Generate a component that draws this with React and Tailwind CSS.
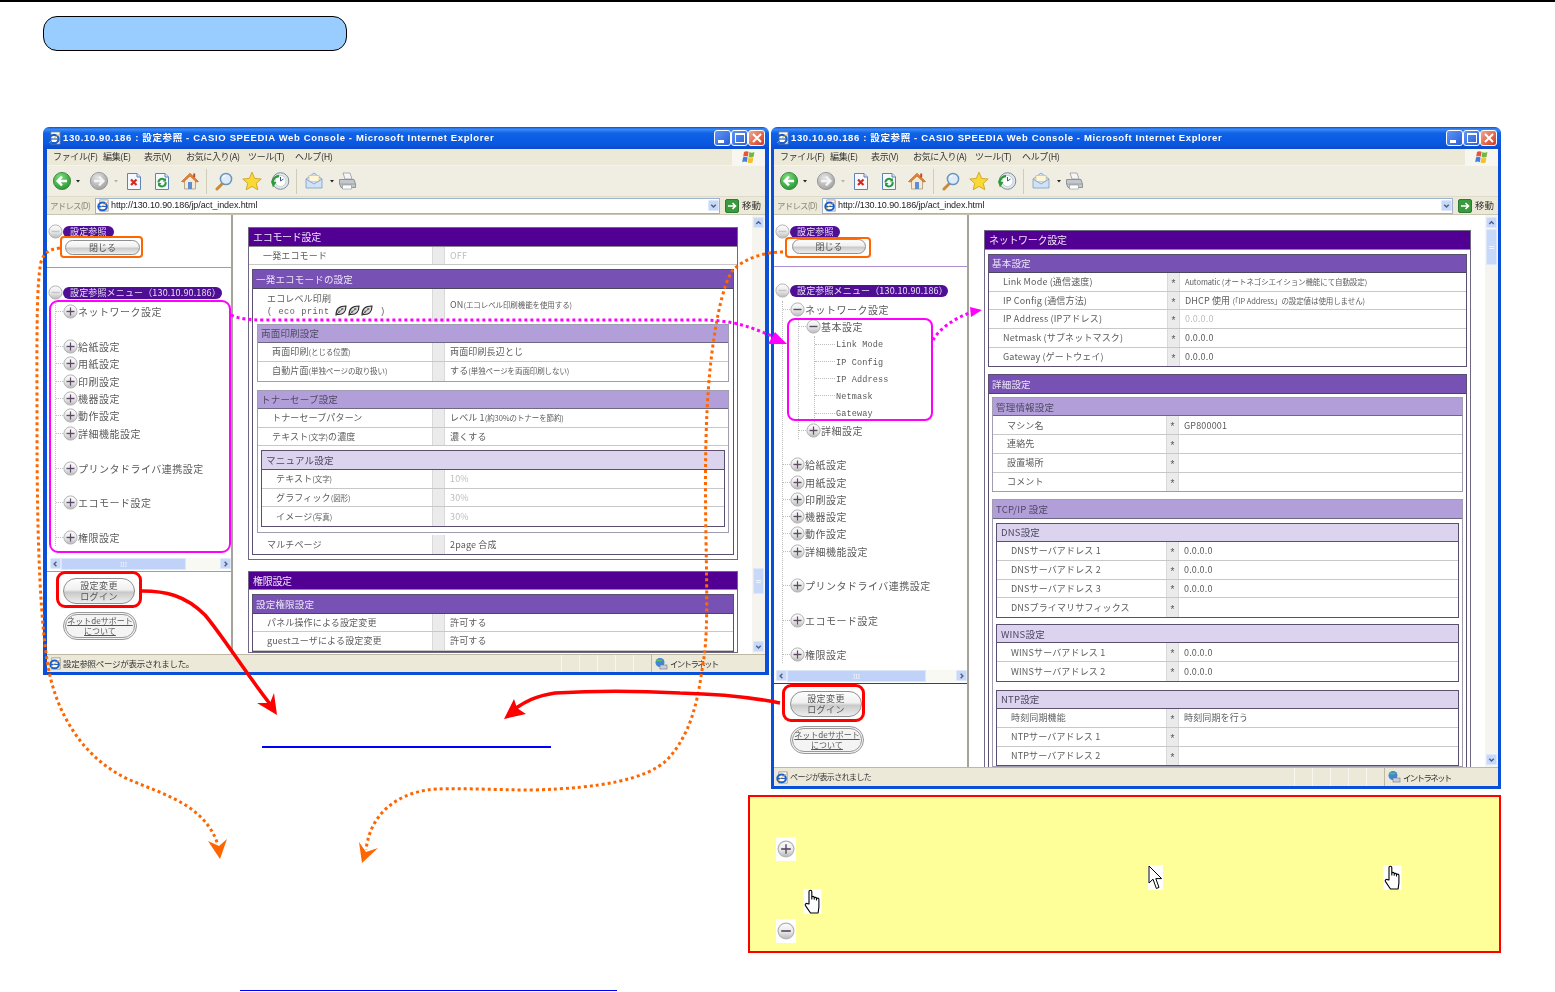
import React from "react";

const JP = "font-['Noto_Sans_CJK_JP','Liberation_Sans',sans-serif]";

function Defs() {
  return (
    <svg className="absolute w-0 h-0" aria-hidden="true">
      <defs>
        <linearGradient id="gb" x1="0" y1="0" x2="0" y2="1">
          <stop offset="0" stopColor="#fdfdfd" />
          <stop offset="0.55" stopColor="#e8e8e8" />
          <stop offset="1" stopColor="#b8b8b8" />
        </linearGradient>
        <radialGradient id="grn" cx="0.4" cy="0.3" r="0.8">
          <stop offset="0" stopColor="#7fe07a" />
          <stop offset="1" stopColor="#1d8f2c" />
        </radialGradient>
        <radialGradient id="gry" cx="0.4" cy="0.3" r="0.8">
          <stop offset="0" stopColor="#e4e4e4" />
          <stop offset="1" stopColor="#9a9a9a" />
        </radialGradient>
      </defs>
    </svg>
  );
}

function Circ({ kind = "plus", size = 15 }) {
  const c = kind === "blank" ? "#c4c4ca" : "#5c4a68";
  return (
    <svg width={size} height={size} viewBox="0 0 15 15" className="shrink-0">
      <circle cx="7.5" cy="7.5" r="6.6" fill="url(#gb)" stroke="#b4b4b4" />
      <path d="M3.5 7.5H11.5" stroke={c} strokeWidth="1.4" />
      {kind === "plus" && <path d="M7.5 3.5V11.5" stroke={c} strokeWidth="1.2" />}
    </svg>
  );
}

function IE({ size = 13 }) {
  return (
    <svg width={size} height={size} viewBox="0 0 14 14" className="shrink-0">
      <rect x="3" y="1" width="9" height="12" fill="#fff" stroke="#8a8a8a" strokeWidth="0.8" />
      <ellipse cx="6" cy="8" rx="4.6" ry="4.2" fill="none" stroke="#1c5fc8" strokeWidth="2.2" />
      <path d="M2 8H10" stroke="#1c5fc8" strokeWidth="1.2" />
      <path d="M1 12C3 10 8 5 12 3" stroke="#e0a030" strokeWidth="0.9" fill="none" />
    </svg>
  );
}

function Flag() {
  return (
    <svg width="16" height="16" viewBox="0 0 16 16">
      <path d="M3 3C4.5 2 6 2 7.6 2.8L6.8 7.6C5.2 6.8 3.6 6.8 2.2 7.6Z" fill="#e8553a" />
      <path d="M8.4 3.1C10 3.9 11.6 3.9 13.4 3L12.6 7.8C11 8.7 9.2 8.6 7.6 7.9Z" fill="#70b83e" />
      <path d="M2 8.4C3.5 7.6 5 7.6 6.6 8.4L5.8 13.2C4.3 12.4 2.7 12.4 1.2 13.2Z" fill="#3f7fe0" />
      <path d="M7.4 8.7C9 9.5 10.8 9.5 12.4 8.6L11.6 13.4C10 14.3 8.2 14.2 6.6 13.5Z" fill="#f4c030" />
    </svg>
  );
}

const Back = () => (
  <svg width="20" height="20" viewBox="0 0 20 20">
    <circle cx="10" cy="10" r="8.6" fill="url(#grn)" stroke="#2c7a34" strokeWidth="0.8" />
    <path d="M15 10H6.5M10 5.6 5.6 10 10 14.4" fill="none" stroke="#fff" strokeWidth="2.4" />
  </svg>
);
const Forward = () => (
  <svg width="20" height="20" viewBox="0 0 20 20">
    <circle cx="10" cy="10" r="8.6" fill="url(#gry)" stroke="#8b8b8b" strokeWidth="0.8" />
    <path d="M5 10H13.5M10 5.6 14.4 10 10 14.4" fill="none" stroke="#f4f4f4" strokeWidth="2.4" />
  </svg>
);
const Page = ({ children }) => (
  <svg width="18" height="19" viewBox="0 0 18 19">
    <path d="M2.5 1.5H12L15.5 5V17.5H2.5Z" fill="#f5f8ff" stroke="#5f82b8" />
    <path d="M12 1.5V5H15.5" fill="#dce6f5" stroke="#5f82b8" />
    {children}
  </svg>
);
const Stop = () => (
  <Page>
    <path d="M6 7.5 11.5 13M11.5 7.5 6 13" stroke="#d52a1c" strokeWidth="2.2" />
  </Page>
);
const Refresh = () => (
  <Page>
    <path d="M5.5 10.5A3.5 3.5 0 0 1 12 8.5" fill="none" stroke="#2d9a3a" strokeWidth="2" />
    <path d="M12.5 10A3.5 3.5 0 0 1 6 12.5" fill="none" stroke="#2d9a3a" strokeWidth="2" />
    <path d="M13 6V9.6H9.6ZM5 14.5V11H8.5Z" fill="#2d9a3a" />
  </Page>
);
const Home = () => (
  <svg width="20" height="20" viewBox="0 0 20 20">
    <path d="M4.5 9V18H15.5V9L10 4Z" fill="#f2e9d8" stroke="#a58a66" strokeWidth="0.7" />
    <path d="M1.5 10.5 10 2.2 18.5 10.5 16.5 11 10 5 3.5 11Z" fill="#e8842e" stroke="#b75a1a" strokeWidth="0.6" />
    <rect x="13.2" y="2.5" width="2" height="3.8" fill="#c24a2a" />
    <rect x="8" y="11" width="4" height="7" fill="#5f8ecb" />
  </svg>
);
const Search = () => (
  <svg width="20" height="20" viewBox="0 0 20 20">
    <path d="M9 12 3 18" stroke="#c98c3a" strokeWidth="3" strokeLinecap="round" />
    <circle cx="12" cy="8" r="5.6" fill="#dcecfb" stroke="#6d93b8" strokeWidth="1.5" />
    <path d="M9 6.5A3.5 3.5 0 0 1 12 4.5" stroke="#fff" strokeWidth="1.2" fill="none" />
  </svg>
);
const Star = () => (
  <svg width="20" height="20" viewBox="0 0 20 20">
    <path d="M10 1.2 12.7 7.4 19.2 8 14.3 12.3 15.8 18.8 10 15.4 4.2 18.8 5.7 12.3 .8 8 7.3 7.4Z" fill="#fbd934" stroke="#c89a18" strokeWidth="0.8" />
  </svg>
);
const History = () => (
  <svg width="20" height="20" viewBox="0 0 20 20">
    <circle cx="10.5" cy="10" r="8.3" fill="#dfe8ee" stroke="#7f8c95" strokeWidth="1" />
    <circle cx="10.5" cy="10" r="5.5" fill="#fff" stroke="#a9b6bf" strokeWidth="0.6" />
    <path d="M10.5 6V10L13.5 8" stroke="#3b5f80" strokeWidth="1" fill="none" />
    <path d="M2.5 11.5A7 7 0 0 1 9 5" stroke="#2d9a3a" strokeWidth="2.4" fill="none" />
    <path d="M3 16.5 1 10.5 6.5 11Z" fill="#2d9a3a" />
  </svg>
);
const Mail = () => (
  <svg width="20" height="20" viewBox="0 0 20 20">
    <path d="M2 8 10 2 18 8V17H2Z" fill="#cfe2f7" stroke="#7f9cc0" strokeWidth="0.8" />
    <rect x="5" y="4.5" width="10" height="6" fill="#fff6d8" stroke="#d9b25e" strokeWidth="0.5" />
    <path d="M2 8 10 13 18 8" fill="none" stroke="#7f9cc0" strokeWidth="0.8" />
  </svg>
);
const Print = () => (
  <svg width="20" height="20" viewBox="0 0 20 20">
    <path d="M6 2H13L15 8H8Z" fill="#f6f6f6" stroke="#8a8f94" strokeWidth="0.7" />
    <path d="M2.5 8.5H17L18.5 13V16.5H4L2.5 13Z" fill="#c4c8cc" stroke="#7c8186" strokeWidth="0.8" />
    <path d="M3 13H18.5" stroke="#8a8f94" strokeWidth="0.6" />
    <rect x="5.5" y="14" width="9" height="4" fill="#fff" stroke="#8a8f94" strokeWidth="0.6" />
  </svg>
);
const Caret = ({ muted }) => (
  <svg width="8" height="8" viewBox="0 0 8 8" className="shrink-0">
    <path d="M2 3H6L4 5.5Z" fill={muted ? "#b5b3a5" : "#222"} />
  </svg>
);
const Chev = ({ dir = "down" }) => {
  const d = {
    down: "M2.5 3.5 5 6 7.5 3.5",
    up: "M2.5 6 5 3.5 7.5 6",
    left: "M6 2.5 3.5 5 6 7.5",
    right: "M4 2.5 6.5 5 4 7.5",
  }[dir];
  return (
    <svg width="10" height="10" viewBox="0 0 10 10">
      <path d={d} fill="none" stroke="#4d6185" strokeWidth="1.6" />
    </svg>
  );
};
const ScrollBtn = ({ dir }) => (
  <div className="w-[11px] h-[11px] flex items-center justify-center shrink-0 bg-[#c8d8f8] border border-[#dfe8fb] rounded-[1px]">
    <Chev dir={dir} />
  </div>
);

const Leaf = () => (
  <svg width="12" height="11" viewBox="0 0 12 11" className="inline-block mr-[1px] align-[-2px]">
    <path d="M1 10C1 4 4 1 11 1 11 7 8 10 2.5 9.5Z" fill="#dcdcdc" stroke="#2b2b2b" strokeWidth="1.1" />
    <path d="M2 9 8 3.5M4 5.5V8M6 4H8.5" stroke="#2b2b2b" strokeWidth="0.7" />
  </svg>
);

function Hand() {
  return (
    <svg width="19" height="25" viewBox="0 0 18 25">
      <rect width="18" height="25" fill="#fff" />
      <path d="M5.5 15V2.6a1.4 1.4 0 0 1 2.8 0V10V8.6a1.2 1.2 0 0 1 2.4 0V10.2V9.2a1.2 1.2 0 0 1 2.3 0V11V10.3a1.2 1.2 0 0 1 2.4 0V18L14.6 24H7L2 16.6C1 15 3 13.7 4.2 14.8Z" fill="#fff" stroke="#000" strokeWidth="1.1" strokeLinejoin="round" />
    </svg>
  );
}

function Cursor() {
  return (
    <svg width="15" height="25" viewBox="0 0 15 25">
      <rect width="15" height="25" fill="#fff" />
      <path d="M1 1V18L5 14.2 8.4 23.5 11 22.4 7.8 13.6H13.6Z" fill="#fff" stroke="#000" strokeWidth="1" strokeLinejoin="round" />
    </svg>
  );
}

/* ---------- browser chrome ---------- */

function TitleBar() {
  return (
    <div className="h-[22px] shrink-0 rounded-t-[6px] flex items-center pl-[5px] pr-[4px] bg-[linear-gradient(180deg,#0a4fd6_0%,#3c8cf6_10%,#0f62e6_28%,#0a58e2_75%,#0a4ccc_100%)]">
      <IE size={14} />
      <div className="ml-[1px] flex-1 text-white font-bold text-[9.5px] tracking-[0.63px] whitespace-nowrap font-['Liberation_Sans','Noto_Sans_CJK_JP',sans-serif]">
        130.10.90.186 : 設定参照 - CASIO SPEEDIA Web Console - Microsoft Internet Explorer
      </div>
      <div className="flex">
        <div className="w-[17px] h-[16px] rounded-[3px] border border-white bg-[linear-gradient(135deg,#5f95f5,#2a5fd8)] flex items-end pl-[3px] pb-[2px]">
          <div className="w-[6px] h-[3px] bg-white" />
        </div>
        <div className="w-[17px] h-[16px] rounded-[3px] border border-white bg-[linear-gradient(135deg,#5f95f5,#2a5fd8)] flex items-center justify-center">
          <div className="w-[10px] h-[10px] border border-white border-t-2" />
        </div>
        <div className="w-[17px] h-[16px] rounded-[3px] border border-white bg-[linear-gradient(135deg,#f3a78f,#cf3a1d)] flex items-center justify-center">
          <svg width="10" height="10" viewBox="0 0 10 10"><path d="M1 1 9 9M9 1 1 9" stroke="#fff" strokeWidth="2" /></svg>
        </div>
      </div>
    </div>
  );
}

function MenuBar() {
  const items = [
    ["ファイル(F)", "w-[50px]"],
    ["編集(E)", "w-[41px]"],
    ["表示(V)", "w-[42px]"],
    ["お気に入り(A)", "w-[62px]"],
    ["ツール(T)", "w-[47px]"],
    ["ヘルプ(H)", "w-[40px]"],
  ];
  return (
    <div className={`h-[17px] shrink-0 flex items-center pl-[6px] bg-[#ece9d8] border-b border-[#f6f4ea] text-[9px] text-[#333] ${JP}`}>
      {items.map(([t, w]) => (
        <span key={t} className={`${w} whitespace-nowrap tracking-[-0.35px]`}>{t}</span>
      ))}
      <div className="ml-auto w-[33px] h-[17px] bg-[#f7f6f0] flex items-center justify-center">
        <Flag />
      </div>
    </div>
  );
}

function ToolSlot({ w, children }) {
  return <div className={`${w} flex items-center justify-center shrink-0`}>{children}</div>;
}

function ToolBar() {
  return (
    <div className="h-[31px] shrink-0 flex items-center pl-[3px] bg-[#f0eee2] border-b border-[#dedbc8]">
      <ToolSlot w="w-[24px]"><Back /></ToolSlot>
      <ToolSlot w="w-[8px]"><Caret /></ToolSlot>
      <div className="w-[5px]" />
      <ToolSlot w="w-[24px]"><Forward /></ToolSlot>
      <ToolSlot w="w-[9px]"><Caret muted /></ToolSlot>
      <ToolSlot w="w-[28px]"><Stop /></ToolSlot>
      <ToolSlot w="w-[28px]"><Refresh /></ToolSlot>
      <ToolSlot w="w-[28px]"><Home /></ToolSlot>
      <div className="w-[1px] h-[25px] bg-[#cfccb8] ml-[2px] mr-[3px]" />
      <ToolSlot w="w-[28px]"><Search /></ToolSlot>
      <ToolSlot w="w-[28px]"><Star /></ToolSlot>
      <ToolSlot w="w-[28px]"><History /></ToolSlot>
      <div className="w-[1px] h-[25px] bg-[#cfccb8] ml-[2px] mr-[3px]" />
      <ToolSlot w="w-[28px]"><Mail /></ToolSlot>
      <ToolSlot w="w-[8px]"><Caret /></ToolSlot>
      <ToolSlot w="w-[22px]"><Print /></ToolSlot>
    </div>
  );
}

function AddressBar() {
  return (
    <div className={`h-[18px] shrink-0 flex items-center pl-[3px] bg-[#ece9d8] border-b border-[#c9c6b4] ${JP}`}>
      <span className="w-[45px] text-[8.5px] text-[#8a8a80] tracking-[-0.8px] whitespace-nowrap">アドレス(D)</span>
      <div className="flex-1 h-[16px] bg-white border border-[#9db3cd] flex items-center pl-[1px]">
        <IE size={13} />
        <span className="ml-[1px] text-[9px] text-[#222] tracking-[-0.1px] whitespace-nowrap font-['Liberation_Sans',sans-serif]">http://130.10.90.186/jp/act_index.html</span>
        <div className="ml-auto"><ScrollBtn dir="down" /></div>
      </div>
      <div className="w-[14px] h-[14px] ml-[5px] bg-[#3a9a3e] border border-[#2c7a34] rounded-[2px] flex items-center justify-center">
        <svg width="10" height="10" viewBox="0 0 10 10"><path d="M1 5H8M5.5 2 8.5 5 5.5 8" stroke="#fff" strokeWidth="1.6" fill="none" /></svg>
      </div>
      <span className="w-[26px] pl-[3px] text-[9.5px] text-[#333] whitespace-nowrap">移動</span>
    </div>
  );
}

function StatusBar({ text, h, textCls }) {
  return (
    <div className={`${h} shrink-0 flex items-center bg-[#ece9d8] border-t border-[#bdb9a5] ${JP} text-[#333] relative`}>
      <div className="pl-[2px] flex items-center flex-1">
        <IE size={13} />
        <span className={`ml-[1px] whitespace-nowrap ${textCls}`}>{text}</span>
      </div>
      {[0, 1, 2, 3, 4].map((i) => (
        <div key={i} className="w-[18px] h-full border-l border-[#f8f7ef]" />
      ))}
      <div className="w-[114px] h-full border-l border-[#bdb9a5] flex items-center pl-[2px]">
        <svg width="14" height="14" viewBox="0 0 14 14" className="shrink-0">
          <circle cx="6" cy="5.5" r="4.5" fill="#3f86d8" />
          <path d="M2.5 4C4 2 6 5 8 3" stroke="#5fbd5a" strokeWidth="1.6" fill="none" />
          <rect x="6" y="8" width="7" height="4" fill="#c9d0d8" stroke="#6c7680" strokeWidth="0.6" />
        </svg>
        <span className="ml-[2px] whitespace-nowrap text-[8.5px] tracking-[-1.7px]">イントラネット</span>
      </div>
    </div>
  );
}

/* ---------- left frame ---------- */

function Pill({ children, w }) {
  return (
    <div className={`${w} h-[12px] rounded-full bg-[#4f0f94] text-[#e6e0f2] text-[9px] leading-[12px] pl-[7px] whitespace-nowrap tracking-[0.15px] ${JP}`}>
      {children}
    </div>
  );
}

function Tree({ children, className = "" }) {
  return <div className={`border-l border-dotted border-[#bdbdbd] ${className}`}>{children}</div>;
}

function Node({ label, kind = "plus" }) {
  return (
    <div className={`h-[var(--rh)] flex items-center text-[10px] text-[#5a5a5a] tracking-[0.5px] whitespace-nowrap ${JP}`}>
      <div className="w-[7px] border-t border-dotted border-[#bdbdbd]" />
      <Circ kind={kind} />
      <span>{label}</span>
    </div>
  );
}

function Leafnode({ label }) {
  return (
    <div className="h-[var(--rh)] flex items-center text-[8.5px] text-[#5a5a5a] tracking-[0.15px] whitespace-nowrap font-['Liberation_Mono',monospace]">
      <div className="w-[20px] border-t border-dotted border-[#bdbdbd] mr-[1px]" />
      <span className="pt-[3px]">{label}</span>
    </div>
  );
}

const Gap = () => <div className="h-[var(--rh)]" />;

function Capsule({ children, className = "" }) {
  return (
    <div className={`rounded-full border border-[#8f8f8f] bg-[linear-gradient(180deg,#fdfdfd_0%,#f0f0f0_45%,#c9c9c9_55%,#eeeeee_100%)] flex items-center justify-center text-[#555] ${JP} ${className}`}>
      {children}
    </div>
  );
}

function LoginBtn() {
  return (
    <Capsule className="w-[72px] h-[26px] flex-col leading-[11px] text-[9px] tracking-[0.4px]">
      <span>設定変更</span>
      <span>ログイン</span>
    </Capsule>
  );
}

function SupportBtn() {
  return (
    <div className={`w-[74px] h-[28px] rounded-full border-[3px] border-double border-[#999] bg-[#f4f4f4] flex flex-col items-center justify-center leading-[10px] text-[8px] whitespace-nowrap text-[#555] underline ${JP}`}>
      <span>ネットdeサポート</span>
      <span>について</span>
    </div>
  );
}

function HScroll({ pad, thumb, track, divider }) {
  return (
    <div className={`h-[14px] shrink-0 flex items-start ${pad} ${divider}`}>
      <ScrollBtn dir="left" />
      <div className={`${thumb} h-[12px] bg-[#c0d2f7] border border-[#dde6fb] flex items-center justify-center`}>
        <div className="text-[7px] leading-none text-[#eef3ff]">III</div>
      </div>
      <div className={`${track} h-[12px] bg-[#f9f9f4]`} />
      <ScrollBtn dir="right" />
    </div>
  );
}

function LeftFrame1() {
  return (
    <div className="w-[186px] shrink-0 flex flex-col border-r-2 border-[#a6a39a] bg-white">
      <div className="h-[53px] shrink-0 border-b border-[#a98fcf] pl-[1px] pt-[9px]">
        <div className="flex items-center"><Circ kind="blank" /><Pill w="w-[51px]">設定参照</Pill></div>
        <Capsule className="w-[75px] h-[15px] ml-[17px] mt-[1px] text-[9px]">閉じる</Capsule>
      </div>
      <div className="flex-1 min-h-0 pt-[17px] pl-[1px] [--rh:17.38px]">
        <div className="flex items-center"><Circ kind="blank" /><Pill w="w-[159px]">設定参照メニュー（130.10.90.186）</Pill></div>
        <Tree className="ml-[7px] mt-[3px]">
          <Node label="ネットワーク設定" />
          <Gap />
          <Node label="給紙設定" />
          <Node label="用紙設定" />
          <Node label="印刷設定" />
          <Node label="機器設定" />
          <Node label="動作設定" />
          <Node label="詳細機能設定" />
          <Gap />
          <Node label="プリンタドライバ連携設定" />
          <Gap />
          <Node label="エコモード設定" />
          <Gap />
          <Node label="権限設定" />
        </Tree>
      </div>
      <HScroll pad="pl-[3px]" thumb="w-[125px]" track="w-[34px]" divider="border-b border-[#a98fcf]" />
      <div className="h-[82px] shrink-0 pl-[16px] pt-[6px]">
        <LoginBtn />
        <div className="mt-[8px]"><SupportBtn /></div>
      </div>
    </div>
  );
}

function LeftFrame2() {
  return (
    <div className="w-[195px] shrink-0 flex flex-col border-r-2 border-[#a6a39a] bg-white">
      <div className="h-[52px] shrink-0 border-b border-[#a98fcf] pl-[1px] pt-[9px]">
        <div className="flex items-center"><Circ kind="blank" /><Pill w="w-[50px]">設定参照</Pill></div>
        <Capsule className="w-[74px] h-[15px] ml-[17px] text-[9px]">閉じる</Capsule>
      </div>
      <div className="flex-1 min-h-0 pt-[16px] pl-[1px] [--rh:17.25px]">
        <div className="flex items-center"><Circ kind="blank" /><Pill w="w-[158px]">設定参照メニュー（130.10.90.186）</Pill></div>
        <Tree className="ml-[7px] mt-[3px]">
          <Node label="ネットワーク設定" kind="minus" />
          <Tree className="ml-[15px]">
            <Node label="基本設定" kind="minus" />
            <Tree className="ml-[15px]">
              <Leafnode label="Link Mode" />
              <Leafnode label="IP Config" />
              <Leafnode label="IP Address" />
              <Leafnode label="Netmask" />
              <Leafnode label="Gateway" />
            </Tree>
            <Node label="詳細設定" />
          </Tree>
          <Gap />
          <Node label="給紙設定" />
          <Node label="用紙設定" />
          <Node label="印刷設定" />
          <Node label="機器設定" />
          <Node label="動作設定" />
          <Node label="詳細機能設定" />
          <Gap />
          <Node label="プリンタドライバ連携設定" />
          <Gap />
          <Node label="エコモード設定" />
          <Gap />
          <Node label="権限設定" />
        </Tree>
      </div>
      <HScroll pad="pl-[2px]" thumb="w-[139px]" track="w-[30px]" divider="border-b border-[#5a1f9a]" />
      <div className="h-[83px] shrink-0 pl-[16px] pt-[7px]">
        <LoginBtn />
        <div className="mt-[9px]"><SupportBtn /></div>
      </div>
    </div>
  );
}

/* ---------- settings tables ---------- */

function Box({ level, title, className = "", children }) {
  const styles = {
    0: ["border-[#6f6884]", "bg-[#520094] text-[#eee6f6] text-[10px] tracking-[-0.3px] border-b border-[#8b8b8b]", "pl-[4px]"],
    1: ["border-[#5a4f6e]", "bg-[#7851b5] text-[#ece6f6] text-[9.5px] tracking-[0.2px] border-b border-[#4b4560]", "pl-[3px]"],
    2: ["border-[#a19db0]", "bg-[#b29fd9] text-[#4e4862] text-[9.5px] tracking-[0.2px] border-b border-[#6f6884]", "pl-[3px]"],
    3: ["border-[#5a4f6e]", "bg-[#dcd3ef] text-[#4e4862] text-[9.5px] tracking-[0.2px] border-b border-[#5a4f6e]", "pl-[4px]"],
  }[level];
  return (
    <div className={`border ${styles[0]} ${className}`}>
      <div className={`${styles[1]} ${styles[2]} h-[18.5px] flex items-center whitespace-nowrap ${JP}`}>
        {title}
      </div>
      {children}
    </div>
  );
}

function Row({ w, label, value, star, muted, tall, last, className = "" }) {
  return (
    <div className={`${tall ? "h-[33px]" : "h-[18.7px]"} flex ${last ? "" : "border-b border-[#c8c8c8]"} ${JP} text-[9px] text-[#5c5c5c] tracking-[0.15px] whitespace-nowrap ${className}`}>
      <div className="pl-[14px] flex items-center shrink-0 overflow-hidden" style={{ width: w }}>
        <div>{label}</div>
      </div>
      <div className="w-[13px] shrink-0 bg-[#ebebeb] border-x border-[#d9d9d9] flex items-center justify-center text-[10px] pt-[3px] text-[#555] font-['Liberation_Sans',sans-serif]">
        {star ? "*" : ""}
      </div>
      <div className={`pl-[5px] flex items-center ${muted ? "text-[#bdbdbd]" : ""}`}>{value}</div>
    </div>
  );
}

const Sm = ({ children }) => <span className="text-[7.5px] tracking-[-0.1px]">{children}</span>;

function Content1() {
  return (
    <div className="flex-1 min-w-0 bg-white overflow-hidden pl-[15px] pr-[14px] pt-[12px]">
      <Box level={0} title="エコモード設定">
        <Row w={183} label="一発エコモード" value="OFF" muted />
        <Box level={1} title="一発エコモードの設定" className="mx-[3px] mt-[4px]">
          <Row
            w={179}
            tall
            last
            label={
              <div className="leading-[12px]">
                <div>エコレベル印刷</div>
                <div className="font-['Liberation_Mono',monospace] text-[8.5px] tracking-[0.6px]">( eco print <Leaf /><Leaf /><Leaf /> )</div>
              </div>
            }
            value={<span>ON<Sm>(エコレベル印刷機能を使用する)</Sm></span>}
          />
          <Box level={2} title="両面印刷設定" className="mx-[4px] mt-[2px]">
            <Row w={174} label={<span>両面印刷<Sm>(とじる位置)</Sm></span>} value="両面印刷長辺とじ" />
            <Row w={174} label={<span>自動片面<Sm>(単独ページの取り扱い)</Sm></span>} value={<span>する<Sm>(単独ページを両面印刷しない)</Sm></span>} last />
          </Box>
          <Box level={2} title="トナーセーブ設定" className="mx-[4px] mt-[8px]">
            <Row w={174} label="トナーセーブパターン" value={<span>レベル 1<Sm>(約30%のトナーを節約)</Sm></span>} />
            <Row w={174} label={<span>テキスト<Sm>(文字)</Sm>の濃度</span>} value="濃くする" />
            <Box level={3} title="マニュアル設定" className="mx-[3px] mt-[4px] mb-[5px]">
              <Row w={170} label={<span>テキスト<Sm>(文字)</Sm></span>} value="10%" muted />
              <Row w={170} label={<span>グラフィック<Sm>(図形)</Sm></span>} value="30%" muted />
              <Row w={170} label={<span>イメージ<Sm>(写真)</Sm></span>} value="30%" muted last />
            </Box>
          </Box>
          <Row w={179} label="マルチページ" value="2page 合成" last className="mt-[2px]" />
        </Box>
        <div className="h-[4px]" />
      </Box>
      <Box level={0} title="権限設定" className="mt-[11px]">
        <Box level={1} title="設定権限設定" className="mx-[3px] mt-[4px]">
          <Row w={179} label="パネル操作による設定変更" value="許可する" />
          <Row w={179} label="guestユーザによる設定変更" value="許可する" />
        </Box>
      </Box>
    </div>
  );
}

function Content2() {
  return (
    <div className="flex-1 min-w-0 bg-white overflow-hidden pl-[15px] pr-[14px] pt-[15px]">
      <Box level={0} title="ネットワーク設定">
        <Box level={1} title="基本設定" className="mx-[3px] mt-[4px]">
          <Row w={178} star label="Link Mode (通信速度)" value={<Sm>Automatic (オートネゴシエイション機能にて自動設定)</Sm>} />
          <Row w={178} star label="IP Config (通信方法)" value={<span>DHCP 使用 <Sm>(「IP Address」の設定値は使用しません)</Sm></span>} />
          <Row w={178} star label="IP Address (IPアドレス)" value="0.0.0.0" muted />
          <Row w={178} star label="Netmask (サブネットマスク)" value="0.0.0.0" />
          <Row w={178} star label="Gateway (ゲートウェイ)" value="0.0.0.0" last />
        </Box>
        <Box level={1} title="詳細設定" className="mx-[3px] mt-[7px]">
          <Box level={2} title="管理情報設定" className="mx-[3px] mt-[3px]">
            <Row w={173} star label="マシン名" value="GP800001" />
            <Row w={173} star label="連絡先" />
            <Row w={173} star label="設置場所" />
            <Row w={173} star label="コメント" last />
          </Box>
          <Box level={2} title="TCP/IP 設定" className="mx-[3px] mt-[7px]">
            <Box level={3} title="DNS設定" className="mx-[3px] mt-[4px]">
              <Row w={169} star label="DNSサーバアドレス 1" value="0.0.0.0" />
              <Row w={169} star label="DNSサーバアドレス 2" value="0.0.0.0" />
              <Row w={169} star label="DNSサーバアドレス 3" value="0.0.0.0" />
              <Row w={169} star label="DNSプライマリサフィックス" last />
            </Box>
            <Box level={3} title="WINS設定" className="mx-[3px] mt-[6px]">
              <Row w={169} star label="WINSサーバアドレス 1" value="0.0.0.0" />
              <Row w={169} star label="WINSサーバアドレス 2" value="0.0.0.0" last />
            </Box>
            <Box level={3} title="NTP設定" className="mx-[3px] mt-[8px]">
              <Row w={169} star label="時刻同期機能" value="時刻同期を行う" />
              <Row w={169} star label="NTPサーバアドレス 1" />
              <Row w={169} star label="NTPサーバアドレス 2" last />
            </Box>
          </Box>
        </Box>
      </Box>
    </div>
  );
}

function VScroll({ gap1, thumb, gap2 }) {
  return (
    <div className="w-[13px] shrink-0 bg-[#f5f4ee] flex flex-col pt-[2px] pb-[2px] pl-[1px]">
      <ScrollBtn dir="up" />
      <div className={gap1} />
      <div className={`${thumb} w-[11px] bg-[#c8d8f8] border border-[#dfe8fb] rounded-[1px] flex items-center justify-center`}>
        <div className="w-[5px] h-[3px] border-y border-[#eef3ff]" />
      </div>
      <div className={gap2} />
      <ScrollBtn dir="down" />
    </div>
  );
}

function Window({ pos, borders, left, content, scroll, status, statusH, statusCls }) {
  return (
    <div className={`absolute ${pos} flex flex-col rounded-t-[6px] blur-[0.3px]`}>
      <TitleBar />
      <div className={`flex-1 min-h-0 flex flex-col bg-[#ece9d8] border-[#0a4fd8] ${borders}`}>
        <MenuBar />
        <ToolBar />
        <AddressBar />
        <div className="flex-1 min-h-0 flex">
          {left}
          {content}
          {scroll}
        </div>
        <StatusBar text={status} h={statusH} textCls={statusCls} />
      </div>
    </div>
  );
}

function Annotations() {
  return (
    <svg className="absolute inset-0 pointer-events-none" width="1555" height="992" viewBox="0 0 1555 992" fill="none">
      <g stroke="#ff6600" strokeWidth="3" strokeDasharray="3 3">
        <path d="M60 248C50 249 44 252 41 262C36 285 37 350 37 420C37 500 38 600 47 660C55 715 85 760 130 780C165 795 205 805 218 845" />
        <path d="M783 252C765 252 745 258 733 270C722 285 714 330 710 370C705 420 705 480 706 540C707 600 708 640 702 670C697 705 690 735 667 760C645 780 600 788 533 790C490 790 450 787 427 790C395 795 370 815 366 850" />
      </g>
      <polygon points="220,859 208,841 219,846 227,839" fill="#ff6600" />
      <polygon points="362,863 359,842 366,852 378,848" fill="#ff6600" />
      <g stroke="#ff0000" strokeWidth="3.5">
        <path d="M142 591C165 591 185 595 205 615C222 635 245 672 270 704" />
        <path d="M780 703C750 697 720 694 680 693C640 691 590 691 555 693C535 696 525 702 516 708" />
      </g>
      <polygon points="277,715 257,703 270,703 274,693" fill="#ff0000" />
      <polygon points="504,719 514,699 517,708 526,714" fill="#ff0000" />
      <g stroke="#ff00ff" strokeWidth="3" strokeDasharray="3 3">
        <path d="M231 315C240 319 250 320 265 320L700 320C735 320 750 327 777 338" />
        <path d="M933 340C940 328 955 318 972 312" />
      </g>
      <polygon points="787,344 775,332 768,344" fill="#ff00ff" />
      <polygon points="982,310 970,307 971,317" fill="#ff00ff" />
    </svg>
  );
}

export default function App() {
  return (
    <div className="relative w-[1555px] h-[992px] bg-white overflow-hidden">
      <Defs />
      <div className="h-[2px] bg-black" />
      <div className="absolute left-[43px] top-[16px] w-[304px] h-[35px] rounded-[14px] bg-[#99ccff] border border-black" />

      <Window
        pos="left-[43px] top-[127px] w-[726px] h-[548px]"
        borders="border-l-[4px] border-r-[4px] border-b-[3px]"
        left={<LeftFrame1 />}
        content={<Content1 />}
        scroll={<VScroll gap1="h-[340px]" thumb="h-[26px]" gap2="flex-1" />}
        status="設定参照ページが表示されました。"
        statusH="h-[18px]"
        statusCls="text-[8.5px] tracking-[-0.3px]"
      />
      <Window
        pos="left-[771px] top-[127px] w-[730px] h-[662px]"
        borders="border-l-[3px] border-r-[3px] border-b-[3px]"
        left={<LeftFrame2 />}
        content={<Content2 />}
        scroll={<VScroll gap1="h-[1px]" thumb="h-[36px]" gap2="flex-1" />}
        status="ページが表示されました"
        statusH="h-[19px]"
        statusCls="text-[8px] tracking-[-0.6px]"
      />

      {/* highlight frames */}
      <div className="absolute left-[60px] top-[236px] w-[83px] h-[22px] rounded-[4px] border-2 border-[#ff6600]" />
      <div className="absolute left-[49px] top-[300px] w-[182px] h-[253px] rounded-[9px] border-2 border-[#ff00ff]" />
      <div className="absolute left-[56px] top-[571px] w-[86px] h-[37px] rounded-[9px] border-[3px] border-[#ff0000]" />
      <div className="absolute left-[785px] top-[237px] w-[86px] h-[21px] rounded-[4px] border-2 border-[#ff6600]" />
      <div className="absolute left-[787px] top-[318px] w-[146px] h-[103px] rounded-[8px] border-2 border-[#ff00ff]" />
      <div className="absolute left-[782px] top-[684px] w-[83px] h-[38px] rounded-[9px] border-[3px] border-[#ff0000]" />

      <Annotations />

      {/* rules */}
      <div className="absolute left-[262px] top-[746px] w-[289px] h-[2px] bg-[#0000ff]" />
      <div className="absolute left-[240px] top-[990px] w-[377px] h-[1px] bg-[#0000ff]" />

      {/* note box */}
      <div className="absolute left-[748px] top-[795px] w-[753px] h-[158px] bg-[#ffff99] border-2 border-[#ff0000]">
        <div className="absolute left-[26px] top-[40px] w-[20px] h-[24px] bg-white flex items-center justify-center"><Circ kind="plus" size={18} /></div>
        <div className="absolute left-[26px] top-[122px] w-[20px] h-[24px] bg-white flex items-center justify-center"><Circ kind="minus" size={18} /></div>
        <div className="absolute left-[398px] top-[68px]"><Cursor /></div>
        <div className="absolute left-[633px] top-[68px]"><Hand /></div>
        <div className="absolute left-[53px] top-[92px]"><Hand /></div>
      </div>
    </div>
  );
}
